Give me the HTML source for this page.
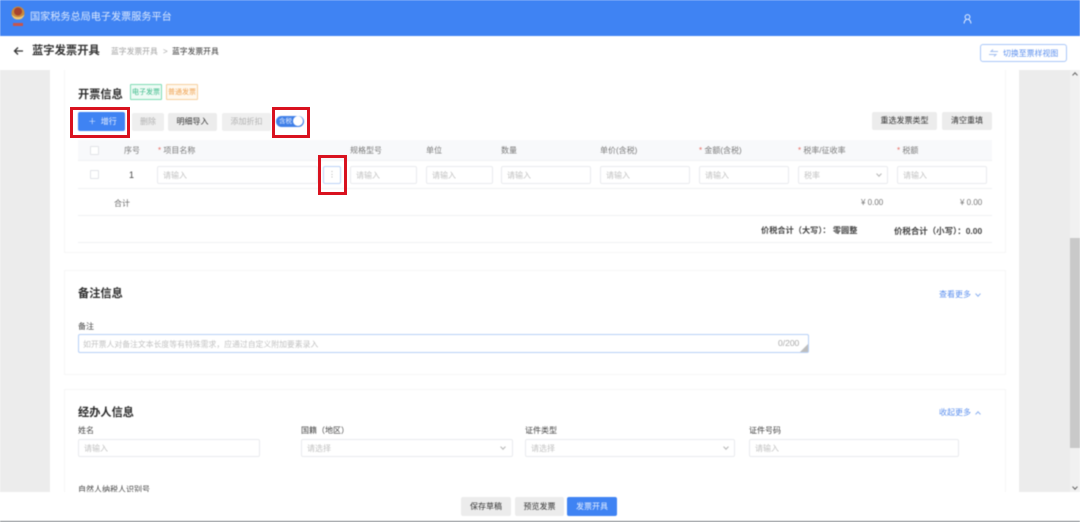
<!DOCTYPE html>
<html lang="zh-CN">
<head>
<meta charset="utf-8">
<title>蓝字发票开具</title>
<style>
*{box-sizing:border-box}
html,body{margin:0;padding:0;width:1080px;height:522px;overflow:hidden;background:#fff}
body{position:relative;font-family:"Liberation Sans","Noto Sans CJK SC",sans-serif;color:#333}
.a{position:absolute;white-space:nowrap}
.t{font-size:8px;line-height:12px;color:#444}
.ph{font-size:7.850px;line-height:12px;color:#c2c2c2}
.h{font-size:8px;line-height:12px;color:#7a7a7a}
.h i{color:#e8685f;font-style:normal}
.inp{position:absolute;border:1px solid #e9ebee;border-radius:2px;background:#fff;font-size:8px;color:#c2c2c2;padding-left:5px;white-space:nowrap}
.btn{position:absolute;text-align:center;border-radius:2px;font-size:8px;white-space:nowrap}
.gray{background:#ececec;color:#333}
.dis{background:#efefef;color:#b0b0b0}
.line{position:absolute;height:1px;background:#f0f1f3}
.card{position:absolute;left:64px;width:942px;background:#fff;border:1px solid #f6f6f6}
.title{position:absolute;font-size:11.200px;line-height:16px;font-weight:700;color:#2c2c2c;white-space:nowrap}
.red{position:absolute;border:3px solid #d9121f}
.chev{position:absolute;width:4px;height:4px;border-right:1px solid #b5b5b5;border-bottom:1px solid #b5b5b5;transform:rotate(45deg)}
.wrap{position:absolute;left:0;top:0;width:1080px;height:522px;filter:blur(.4px)}
</style>
</head>
<body>
<div class="wrap">
  <!-- page backgrounds -->
  <div class="a" style="left:0;top:70px;width:50px;height:422px;background:#ececec"></div>
  <div class="a" style="left:1019px;top:70px;width:51px;height:422px;background:#ececec"></div>
  <div class="a" style="left:1070px;top:70px;width:10px;height:422px;background:#f1f1f1"></div>
  <div class="a" style="left:1070px;top:238px;width:10px;height:210px;background:#c9c9c9"></div>
  <div class="a" style="left:1073px;top:73px;width:4px;height:4px;border-left:1px solid #666;border-top:1px solid #666;transform:rotate(45deg)"></div>
  <div class="a" style="left:1073px;top:485px;width:4px;height:4px;border-right:1px solid #666;border-bottom:1px solid #666;transform:rotate(45deg)"></div>

  <!-- header -->
  <div class="a" style="left:0;top:0;width:1080px;height:36px;background:#3f83f3"></div>
  <svg class="a" style="left:10px;top:5px" width="18" height="24" viewBox="0 0 18 24">
    <circle cx="8" cy="8" r="6.500" fill="#c98a3c"/>
    <circle cx="8" cy="6.500" r="4" fill="#a8432f"/>
    <path d="M1.500 9.500q6.500 5.500 13 0q-1.500 5-6.500 5t-6.500-5z" fill="#f0c878"/>
    <rect x="3" y="18" width="10" height="3" fill="#c9544a"/>
  </svg>
  <div class="a" style="left:30px;top:10px;font-size:10.150px;line-height:15px;color:#dbe8fd">国家税务总局电子发票服务平台</div>
  <svg class="a" style="left:962px;top:13px" width="11" height="12" viewBox="0 0 11 12" fill="none" stroke="#e4eeff" stroke-width="1">
    <circle cx="5.500" cy="4" r="2.400"/>
    <path d="M2 10.500q.5-3.500 2.500-4M9 10.500q-.5-3.500-2.500-4"/>
  </svg>

  <!-- subheader -->
  <svg class="a" style="left:13px;top:46px" width="11" height="10" viewBox="0 0 11 10" fill="none" stroke="#333" stroke-width="1.300">
    <path d="M10 5H1.500M5 1.500L1.500 5 5 8.500"/>
  </svg>
  <div class="a" style="left:32px;top:43px;font-size:11.300px;line-height:17px;font-weight:700;color:#333">蓝字发票开具</div>
  <div class="a" style="left:111px;top:46px;font-size:7.800px;line-height:12px;color:#a0a0a0">蓝字发票开具</div>
  <div class="a" style="left:163px;top:46px;font-size:8px;line-height:12px;color:#a8a8a8">&gt;</div>
  <div class="a" style="left:172px;top:46px;font-size:7.800px;line-height:12px;color:#333">蓝字发票开具</div>
  <div class="a" style="left:980px;top:44px;width:87px;height:18px;border:1px solid #a9c7f8;border-radius:3px;background:#fff"></div>
  <svg class="a" style="left:989px;top:49px" width="9" height="8" viewBox="0 0 9 8" fill="none" stroke="#a3bff0" stroke-width="1"><path d="M0 5.500h7L5 7.500M9 2.500H2L4 .5"/></svg>
  <div class="a" style="left:1003px;top:48px;font-size:7.900px;line-height:12px;color:#5b8fee">切换至票样视图</div>

  <!-- card 1 -->
  <div class="card" style="top:70px;height:183px;border-top:0"></div>
  <div class="title" style="left:78px;top:87px">开票信息</div>
  <div class="a" style="left:130px;top:84px;width:32px;height:16px;border:1px solid #7fdcb4;background:#eefbf5;border-radius:1px;font-size:7px;line-height:16px;text-align:center;color:#38b887">电子发票</div>
  <div class="a" style="left:166px;top:84px;width:32px;height:16px;border:1px solid #f6cf9e;background:#fff8ee;border-radius:1px;font-size:7px;line-height:16px;text-align:center;color:#efa14f">普通发票</div>

  <div class="btn" style="left:78px;top:112px;width:47px;height:19px;background:#3f83f3;color:#e6efff;line-height:19px;padding-left:2px">＋&nbsp;&nbsp;增行</div>
  <div class="btn dis" style="left:132px;top:113px;width:32px;height:18px;line-height:18px">删除</div>
  <div class="btn gray" style="left:168px;top:113px;width:49px;height:18px;line-height:18px">明细导入</div>
  <div class="btn dis" style="left:222px;top:113px;width:49px;height:18px;line-height:18px">添加折扣</div>
  <div class="a" style="left:276px;top:116px;width:28px;height:11px;border-radius:6px;background:#3f7fe8"></div>
  <div class="a" style="left:279px;top:116px;color:#e6efff;font-size:6.500px;line-height:12px">含税</div>
  <div class="a" style="left:293px;top:116px;width:10px;height:10px;border-radius:50%;background:#fff"></div>
  <div class="btn gray" style="left:872px;top:112px;width:65px;height:18px;line-height:18px">重选发票类型</div>
  <div class="btn gray" style="left:942px;top:112px;width:50px;height:18px;line-height:18px">清空重填</div>

  <!-- table -->
  <div class="a" style="left:78px;top:140px;width:914px;height:21px;background:#f8f9fb"></div>
  <div class="a" style="left:90px;top:146px;width:9px;height:9px;border:1px solid #e2e4e8;border-radius:1px;background:#fff"></div>
  <div class="a h" style="left:124px;top:145px">序号</div>
  <div class="a h" style="left:158px;top:145px"><i>*</i> 项目名称</div>
  <div class="a h" style="left:350px;top:145px">规格型号</div>
  <div class="a h" style="left:426px;top:145px">单位</div>
  <div class="a h" style="left:501px;top:145px">数量</div>
  <div class="a h" style="left:600px;top:145px">单价(含税)</div>
  <div class="a h" style="left:699px;top:145px"><i>*</i> 金额(含税)</div>
  <div class="a h" style="left:798px;top:145px"><i>*</i> 税率/征收率</div>
  <div class="a h" style="left:897px;top:145px"><i>*</i> 税额</div>

  <div class="a" style="left:90px;top:170px;width:9px;height:9px;border:1px solid #e2e4e8;border-radius:1px;background:#fff"></div>
  <div class="a" style="left:129px;top:169px;font-size:9px;line-height:12px;color:#444">1</div>
  <div class="inp" style="left:157px;top:166px;width:161px;height:18px;line-height:18px">请输入</div>
  <div class="a" style="left:323px;top:166px;width:18px;height:18px;border:1px solid #bcd3f7;border-radius:2px;text-align:center;font-size:8px;line-height:16px;color:#aaa">⋮</div>
  <div class="inp" style="left:350px;top:166px;width:67px;height:18px;line-height:18px">请输入</div>
  <div class="inp" style="left:426px;top:166px;width:67px;height:18px;line-height:18px">请输入</div>
  <div class="inp" style="left:501px;top:166px;width:90px;height:18px;line-height:18px">请输入</div>
  <div class="inp" style="left:600px;top:166px;width:90px;height:18px;line-height:18px">请输入</div>
  <div class="inp" style="left:699px;top:166px;width:90px;height:18px;line-height:18px">请输入</div>
  <div class="inp" style="left:798px;top:166px;width:90px;height:18px;line-height:18px">税率</div>
  <div class="chev" style="left:877px;top:172px"></div>
  <div class="inp" style="left:897px;top:166px;width:90px;height:18px;line-height:18px">请输入</div>

  <div class="line" style="left:78px;top:160px;width:914px"></div>
  <div class="line" style="left:78px;top:188px;width:914px"></div>
  <div class="a t" style="left:114px;top:198px;color:#666">合计</div>
  <div class="a" style="left:861px;top:197px;font-size:8px;line-height:12px;color:#777">¥ 0.00</div>
  <div class="a" style="left:960px;top:197px;font-size:8px;line-height:12px;color:#777">¥ 0.00</div>
  <div class="line" style="left:78px;top:215px;width:914px"></div>
  <div class="a" style="left:761px;top:225px;font-size:8.200px;line-height:12px;font-weight:700;color:#444">价税合计（大写）： 零圆整</div>
  <div class="a" style="left:894px;top:225px;font-size:8.450px;line-height:12px;font-weight:700;color:#444">价税合计（小写）：0.00</div>
  <div class="line" style="left:78px;top:242px;width:914px"></div>

  <!-- card 2 -->
  <div class="card" style="top:270px;height:105px"></div>
  <div class="title" style="left:78px;top:286px">备注信息</div>
  <div class="a" style="left:939px;top:289px;font-size:8px;line-height:12px;color:#5b8fee">查看更多</div>
  <div class="chev" style="left:976px;top:292px;border-color:#8fb2f0"></div>
  <div class="a t" style="left:78px;top:321px">备注</div>
  <div class="a" style="left:78px;top:334px;width:731px;height:19px;border:1px solid #b7d0f6;border-radius:2px;background:#fff"></div>
  <div class="a ph" style="left:83px;top:339px">如开票人对备注文本长度等有特殊需求，应通过自定义附加要素录入</div>
  <div class="a" style="left:778px;top:337px;font-size:8.500px;line-height:12px;color:#aaa">0/200</div>
  <svg class="a" style="left:800px;top:344px" width="9" height="9" viewBox="0 0 9 9"><path d="M8 0L8 8L0 8z" fill="#bdbdbd"/></svg>

  <!-- card 3 -->
  <div class="card" style="top:389px;height:110px"></div>
  <div class="title" style="left:78px;top:405px">经办人信息</div>
  <div class="a" style="left:939px;top:407px;font-size:8px;line-height:12px;color:#5b8fee">收起更多</div>
  <div class="a" style="left:976px;top:412px;width:4px;height:4px;border-left:1px solid #8fb2f0;border-top:1px solid #8fb2f0;transform:rotate(45deg)"></div>

  <div class="a t" style="left:78px;top:425px">姓名</div>
  <div class="a t" style="left:301px;top:425px">国籍（地区）</div>
  <div class="a t" style="left:525px;top:425px">证件类型</div>
  <div class="a t" style="left:749px;top:425px">证件号码</div>
  <div class="inp" style="left:78px;top:439px;width:182px;height:18px;line-height:18px">请输入</div>
  <div class="inp" style="left:301px;top:439px;width:212px;height:18px;line-height:18px">请选择</div>
  <div class="chev" style="left:501px;top:445px"></div>
  <div class="inp" style="left:525px;top:439px;width:210px;height:18px;line-height:18px">请选择</div>
  <div class="chev" style="left:724px;top:445px"></div>
  <div class="inp" style="left:749px;top:439px;width:210px;height:18px;line-height:18px">请输入</div>
  <div class="a t" style="left:78px;top:484px">自然人纳税人识别号</div>

  <!-- footer -->
  <div class="a" style="left:0;top:492px;width:1080px;height:29px;background:#fff"></div>
  <div class="btn gray" style="left:461px;top:497px;width:50px;height:19px;line-height:19px">保存草稿</div>
  <div class="btn gray" style="left:515px;top:497px;width:49px;height:19px;line-height:19px">预览发票</div>
  <div class="btn" style="left:567px;top:497px;width:50px;height:19px;line-height:19px;background:#3f83f3;color:#e6efff">发票开具</div>
  <div class="a" style="left:0;top:521px;width:1080px;height:1px;background:#6f7479"></div>
</div>

<!-- red highlight boxes -->
<div class="red" style="left:70px;top:107px;width:60px;height:31px"></div>
<div class="red" style="left:272px;top:107px;width:38px;height:31px"></div>
<div class="red" style="left:318px;top:155px;width:29px;height:40px"></div>
</body>
</html>
